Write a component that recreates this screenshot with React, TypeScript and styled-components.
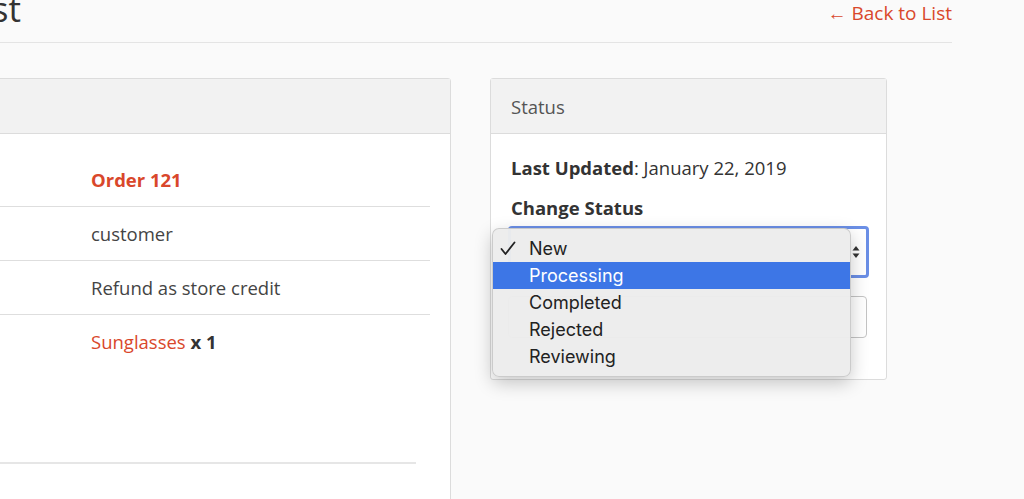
import * as React from 'react';
import styled, { createGlobalStyle } from 'styled-components';

const GlobalStyle = createGlobalStyle`
  html, body {
    margin: 0;
    padding: 0;
    overflow: hidden;
    background-color: #fafafa;
  }
  body {
    font-family: 'Open Sans', 'Noto Sans', sans-serif;
    color: #333;
  }
`;

const Page = styled.div`
  width: 1221px;
  margin-left: -269px;
`;

const Header = styled.div`
  height: 42px;
  display: flex;
  justify-content: space-between;
  align-items: flex-start;
  border-bottom: 1px solid #e4e4e4;
  h1 {
    margin: -9px 0 0;
    font-size: 35px;
    line-height: 36px;
    font-weight: 400;
    color: #333;
    padding-left: 37px;
  }
`;

const BackLink = styled.a`
  margin-top: 0;
  font-size: 19px;
  line-height: 26px;
  color: #d9472b;
  text-decoration: none;
`;

const Columns = styled.div`
  display: grid;
  grid-template-columns: 720px 397px;
  column-gap: 39px;
  margin-top: 35px;
  align-items: start;
`;

const Card = styled.div<{ tall?: boolean }>`
  background-color: #fff;
  border: 1px solid #dcdcdc;
  border-radius: 3px;
  min-height: ${props => (props.tall ? '500px' : 'auto')};
`;

const CardHeader = styled.div`
  height: 54px;
  display: flex;
  align-items: center;
  padding: 0 20px;
  background-color: #f2f2f2;
  border-bottom: 1px solid #dcdcdc;
  font-size: 18.5px;
  color: #555;
`;

const CardBody = styled.div<{ pad?: string }>`
  padding: ${props => props.pad || '20px'};
`;

const Row = styled.div<{ last?: boolean; height?: number }>`
  display: grid;
  grid-template-columns: 1fr 1fr;
  align-items: start;
  height: ${props => props.height || 54}px;
  box-sizing: border-box;
  padding-top: 15px;
  border-bottom: ${props => (props.last ? 'none' : '1px solid #dedede')};
  font-size: 18.5px;
  line-height: 24px;
  .value {
    color: #444;
  }
  .link {
    color: #d9472b;
  }
  .strong {
    font-weight: 700;
    color: #d9472b;
  }
  b {
    color: #333;
  }
`;

const Divider = styled.div`
  margin-right: 14px;
  border-top: 2px solid #e6e6e6;
`;

const Line = styled.div`
  font-size: 18.5px;
  line-height: 24px;
  color: #333;
  b {
    font-weight: 700;
  }
`;

const FieldLabel = styled.div`
  margin-top: 16px;
  font-size: 18.5px;
  line-height: 24px;
  font-weight: 700;
  color: #333;
`;

const SelectWrap = styled.div`
  position: relative;
  margin: 6px -3px 0;
`;

const SelectBox = styled.div`
  height: 52px;
  box-sizing: border-box;
  border: 3px solid #6b8fe6;
  border-radius: 4px;
  background-color: #fff;
  display: flex;
  align-items: center;
  justify-content: flex-end;
  padding-right: 6px;
`;

const Button = styled.div`
  margin-top: 18px;
  margin-right: 2px;
  height: 42px;
  box-sizing: border-box;
  border: 1px solid #c4c4c4;
  border-radius: 4px;
  background-color: #fff;
`;

const Menu = styled.div`
  position: absolute;
  left: -16px;
  top: 2px;
  width: 359px;
  box-sizing: border-box;
  padding: 6px 0;
  background-color: rgba(236, 236, 236, 0.97);
  border: 1px solid rgba(0, 0, 0, 0.14);
  border-radius: 7px;
  box-shadow: 0 6px 18px rgba(0, 0, 0, 0.22);
  font-family: Inter, 'Liberation Sans', sans-serif;
`;

const MenuItem = styled.div<{ active?: boolean }>`
  height: 27px;
  display: flex;
  align-items: center;
  padding-left: 36px;
  position: relative;
  font-size: 18px;
  color: ${props => (props.active ? '#fff' : '#222')};
  background-color: ${props => (props.active ? '#3d76e6' : 'transparent')};
  svg {
    position: absolute;
    left: 7px;
    top: 6px;
  }
`;

const statuses = ['New', 'Processing', 'Completed', 'Rejected', 'Reviewing'];

const Check = () => (
  <svg width="16" height="15" viewBox="0 0 16 15">
    <path d="M1.5 8 L5.5 13 L14.5 1.5" fill="none" stroke="#222" strokeWidth="1.8" strokeLinecap="round" strokeLinejoin="round" />
  </svg>
);

const Arrows = () => (
  <svg width="8" height="14" viewBox="0 0 8 14">
    <path d="M4 1 L7.5 5.5 L0.5 5.5 Z" fill="#333" />
    <path d="M4 13 L7.5 8.5 L0.5 8.5 Z" fill="#333" />
  </svg>
);

const App = () => {
  const selected = 'New';
  const hover = 'Processing';

  return (
    <>
      <GlobalStyle />
      <Page>
        <Header>
          <h1>Return Request</h1>
          <BackLink href="#">← Back to List</BackLink>
        </Header>
        <Columns>
          <Card tall>
            <CardHeader />
            <CardBody pad="19px 20px 0">
              <Row>
                <span />
                <span className="strong">Order 121</span>
              </Row>
              <Row>
                <span />
                <span className="value">customer</span>
              </Row>
              <Row>
                <span />
                <span className="value">Refund as store credit</span>
              </Row>
              <Row last height={147}>
                <span />
                <span>
                  <span className="link">Sunglasses</span> <b>x 1</b>
                </span>
              </Row>
              <Divider />
            </CardBody>
          </Card>
          <Card>
            <CardHeader>Status</CardHeader>
            <CardBody pad="22px 20px 41px">
              <Line>
                <b>Last Updated</b>: January 22, 2019
              </Line>
              <FieldLabel>Change Status</FieldLabel>
              <SelectWrap>
                <SelectBox>
                  <Arrows />
                </SelectBox>
                <Button />
                <Menu>
                  {statuses.map(s => (
                    <MenuItem key={s} active={s === hover}>
                      {s === selected && <Check />}
                      {s}
                    </MenuItem>
                  ))}
                </Menu>
              </SelectWrap>
            </CardBody>
          </Card>
        </Columns>
      </Page>
    </>
  );
};

export default App;
